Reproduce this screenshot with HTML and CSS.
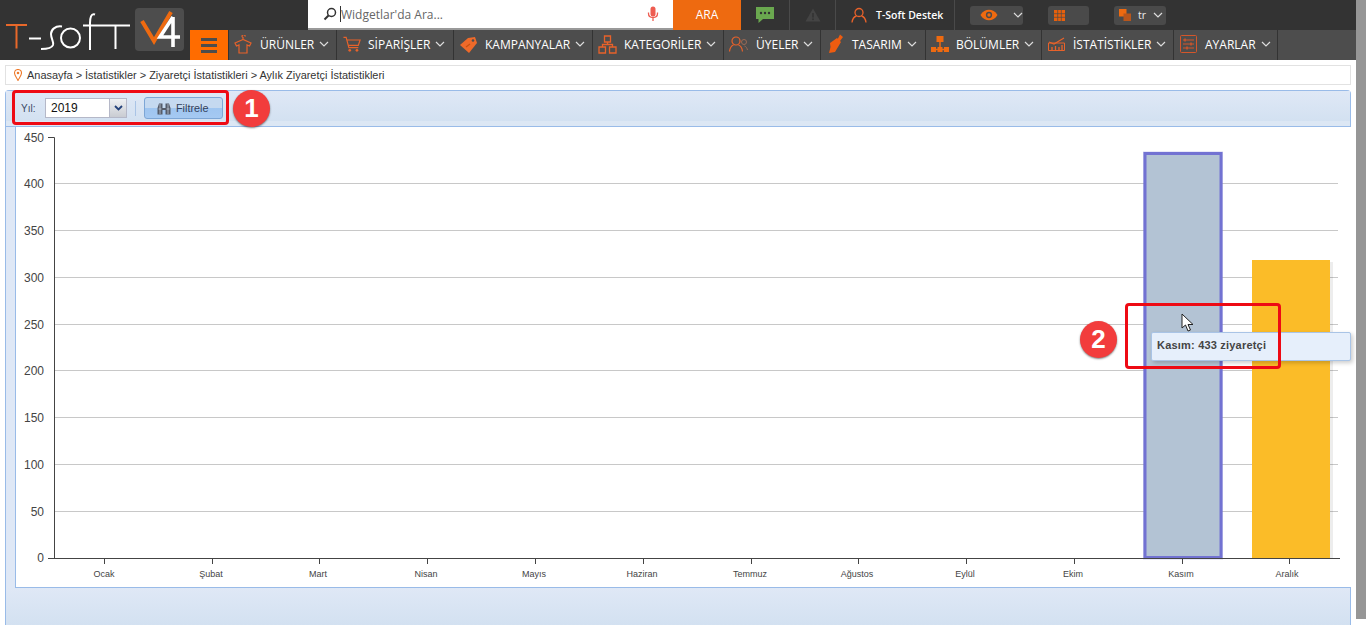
FILE: index.html
```html
<!DOCTYPE html>
<html lang="tr">
<head>
<meta charset="utf-8">
<title>Aylık Ziyaretçi İstatistikleri</title>
<link rel="stylesheet" href="styles.css">
</head>
<body>
<div class="page">
<header class="header">
  <a class="logo">
    <svg width="190" height="60" viewBox="0 0 190 60">
      <path d="M6 25H27M16.500 25V48.500" fill="none" stroke="#e8682a" stroke-width="2"/>
      <path d="M29 38.500H41" fill="none" stroke="#fff" stroke-width="2"/>
      <path d="M62 26.500C55 25.500 51 30 51 34C51 39 54 41 53 45C52 48 48 49 41 49" fill="none" stroke="#fff" stroke-width="2"/>
      <circle cx="70.500" cy="38" r="9.500" fill="none" stroke="#fff" stroke-width="2"/>
      <path d="M95 14.500C91 13 90 18 90 23V50M83 25.500H130M115.500 25.500V49" fill="none" stroke="#fff" stroke-width="2"/>
      <rect x="135" y="8" width="49" height="43" rx="4" fill="#4d4d4d"/>
      <path d="M142 21L154 41L171 12" fill="none" stroke="#ee6a10" stroke-width="4"/>
      <path d="M173 17V47M173 17L160 37H180" fill="none" stroke="#fff" stroke-width="3.600"/>
    </svg>
  </a>
  <div class="bars">
    <div class="topbar">
      <form class="search">
        <svg class="search-ico" width="14" height="14" viewBox="0 0 14 14"><circle cx="8.500" cy="5.500" r="4" fill="none" stroke="#333" stroke-width="1.500"/><path d="M5.500 8.500L1.500 12.500" stroke="#333" stroke-width="2"/></svg>
        <span class="caret"></span>
        <span class="placeholder">Widgetlar'da Ara...</span>
        <svg class="mic" width="12" height="16" viewBox="0 0 12 16"><rect x="3.500" y="0.500" width="5" height="10" rx="2.500" fill="#ee5c50"/><path d="M1.500 6.500V7.500C1.500 10 3.500 11.500 6 11.500C8.500 11.500 10.500 10 10.500 7.500V6.500M6 11.500V15" fill="none" stroke="#ee5c50" stroke-width="1.300"/></svg>
      </form>
      <div class="ara">ARA</div>
      <div class="cell cell-msg">
        <svg width="20" height="18" viewBox="0 0 20 18"><path d="M1 1H19V13H8L3.500 17V13H1Z" fill="#6aa84f"/><circle cx="6" cy="7" r="1.200" fill="#333"/><circle cx="10" cy="7" r="1.200" fill="#333"/><circle cx="14" cy="7" r="1.200" fill="#333"/></svg>
      </div>
      <div class="cell cell-warn">
        <svg width="16" height="14" viewBox="0 0 16 14"><path d="M8 0.500L15.500 13.500H0.500Z" fill="#444"/><rect x="7.200" y="5" width="1.600" height="4.500" fill="#333"/><rect x="7.200" y="10.500" width="1.600" height="1.600" fill="#333"/></svg>
      </div>
      <div class="cell cell-user">
        <svg width="16" height="16" viewBox="0 0 16 16"><circle cx="8" cy="5.500" r="4" fill="none" stroke="#e8622a" stroke-width="1.300"/><path d="M1 15.500C1.500 11.500 3.500 9.500 5.500 9M15 15.500C14.500 11.500 12.500 9.500 10.500 9" fill="none" stroke="#e8622a" stroke-width="1.300"/></svg>
        <span class="user-name">T-Soft Destek</span>
      </div>
      <div class="tools">
        <div class="pill pill-eye">
          <svg width="19" height="12" viewBox="0 0 19 12"><path d="M0.500 6C3 2 6 0.500 9.500 0.500C13 0.500 16 2 18.500 6C16 10 13 11.500 9.500 11.500C6 11.500 3 10 0.500 6Z" fill="#ee6a10"/><circle cx="9.500" cy="6" r="3.300" fill="#4a4a4a"/><circle cx="9.500" cy="6" r="1.800" fill="#ee6a10"/></svg>
          <svg class="chev" width="10" height="6" viewBox="0 0 10 6"><path d="M1 1L5 5L9 1" fill="none" stroke="#ddd" stroke-width="1.200"/></svg>
        </div>
        <div class="pill pill-grid">
          <svg width="11" height="11" viewBox="0 0 11 11"><path d="M0 0H11V11H0Z" fill="#e8600c"/><path d="M0 3.700H11M0 7.300H11M3.700 0V11M7.300 0V11" stroke="#4a4a4a" stroke-width="0.700"/></svg>
        </div>
        <div class="pill pill-lang">
          <svg width="12" height="12" viewBox="0 0 12 12"><rect x="0" y="0" width="7.500" height="7.500" fill="#ee6a10"/><rect x="4.500" y="4.500" width="7.500" height="7.500" fill="#b8561c"/></svg>
          <span class="lang">tr</span>
          <svg class="chev" width="10" height="6" viewBox="0 0 10 6"><path d="M1 1L5 5L9 1" fill="none" stroke="#ddd" stroke-width="1.200"/></svg>
        </div>
      </div>
    </div>
    <nav class="nav">
      <div class="burger"><span></span><span></span><span></span></div>
      <div class="item w-urun">
        <svg width="18" height="19" viewBox="0 0 18 19"><path d="M9 4.500L9 2.500A1.500 1.500 0 1 1 11 1.500M9 4.500L1 8L2.500 11L5 10V18H13V10L15.500 11L17 8Z" fill="none" stroke="#e8622a" stroke-width="1.200"/></svg>
        <span>ÜRÜNLER</span><svg class="chev" width="10" height="6" viewBox="0 0 10 6"><path d="M1 1L5 5L9 1" fill="none" stroke="#ddd" stroke-width="1.200"/></svg>
      </div>
      <div class="item w-sip">
        <svg width="18" height="17" viewBox="0 0 20 18"><path d="M0.500 1H3.500L6.500 12.500H17M4.500 4H19L17 10H6" fill="none" stroke="#e8622a" stroke-width="1.300"/><circle cx="7.500" cy="15.500" r="1.500" fill="#e8622a"/><circle cx="15.500" cy="15.500" r="1.500" fill="#e8622a"/></svg>
        <span>SİPARİŞLER</span><svg class="chev" width="10" height="6" viewBox="0 0 10 6"><path d="M1 1L5 5L9 1" fill="none" stroke="#ddd" stroke-width="1.200"/></svg>
      </div>
      <div class="item w-kam">
        <svg width="19" height="19" viewBox="0 0 19 19"><path d="M1 10L9 3L16 2L18 8L10 18Z" fill="#ee6a2a"/><circle cx="14" cy="5.500" r="1.300" fill="#4d4d4d"/><path d="M7 12L11 9" stroke="#c9500f" stroke-width="1.200"/></svg>
        <span>KAMPANYALAR</span><svg class="chev" width="10" height="6" viewBox="0 0 10 6"><path d="M1 1L5 5L9 1" fill="none" stroke="#ddd" stroke-width="1.200"/></svg>
      </div>
      <div class="item w-kat">
        <svg width="19" height="19" viewBox="0 0 19 19"><path d="M6.500 1H12.500V7H6.500ZM1 12H7.500V18H1ZM11.500 12H18V18H11.500ZM9.500 7V9.500M4.500 12V9.500H14.500V12" fill="none" stroke="#e8622a" stroke-width="1.300"/></svg>
        <span>KATEGORİLER</span><svg class="chev" width="10" height="6" viewBox="0 0 10 6"><path d="M1 1L5 5L9 1" fill="none" stroke="#ddd" stroke-width="1.200"/></svg>
      </div>
      <div class="item w-uye">
        <svg width="19" height="16" viewBox="0 0 19 16"><circle cx="7" cy="5" r="4" fill="none" stroke="#e8622a" stroke-width="1.200"/><path d="M0.500 15.500C1 11.500 3 9.500 4.500 9M13.500 15.500C13 11.500 11 9.500 9.500 9" fill="none" stroke="#e8622a" stroke-width="1.200"/><circle cx="15" cy="6" r="2.500" fill="none" stroke="#9a6a55" stroke-width="1"/><path d="M15.500 10C17 10.500 18 12 18.500 14" fill="none" stroke="#9a6a55"/></svg>
        <span>ÜYELER</span><svg class="chev" width="10" height="6" viewBox="0 0 10 6"><path d="M1 1L5 5L9 1" fill="none" stroke="#ddd" stroke-width="1.200"/></svg>
      </div>
      <div class="item w-tas">
        <svg width="16" height="20" viewBox="0 0 16 20"><path d="M12 0.500L15 3L12 7L9.500 5.500ZM9 4L13 8L7 18L1 19L2.500 13L2 9Z" fill="#ee5c10"/></svg>
        <span>TASARIM</span><svg class="chev" width="10" height="6" viewBox="0 0 10 6"><path d="M1 1L5 5L9 1" fill="none" stroke="#ddd" stroke-width="1.200"/></svg>
      </div>
      <div class="item w-bol">
        <svg width="18" height="18" viewBox="0 0 18 18"><rect x="5.500" y="1" width="7" height="6" fill="#ee6a10"/><rect x="0" y="12" width="5" height="5" fill="#ee6a10"/><rect x="6.500" y="12" width="5" height="5" fill="#ee6a10"/><rect x="13" y="12" width="5" height="5" fill="#ee6a10"/><path d="M9 7V14M4 14.500H14" stroke="#ee6a10" stroke-width="1.500"/></svg>
        <span>BÖLÜMLER</span><svg class="chev" width="10" height="6" viewBox="0 0 10 6"><path d="M1 1L5 5L9 1" fill="none" stroke="#ddd" stroke-width="1.200"/></svg>
      </div>
      <div class="item w-ist">
        <svg width="17" height="14" viewBox="0 0 17 14"><path d="M0.500 13.500V6H16.500V13.500Z" fill="none" stroke="#e8622a"/><path d="M1 5L6 7L11 4L16 1" fill="none" stroke="#e8622a" stroke-width="1.200"/><path d="M4 13V10M7.500 13V9M11 13V10M14 13V8" stroke="#e8622a" stroke-width="1.300"/></svg>
        <span>İSTATİSTİKLER</span><svg class="chev" width="10" height="6" viewBox="0 0 10 6"><path d="M1 1L5 5L9 1" fill="none" stroke="#ddd" stroke-width="1.200"/></svg>
      </div>
      <div class="item w-aya">
        <svg width="17" height="18" viewBox="0 0 17 18"><rect x="0.500" y="0.500" width="16" height="17" rx="1" fill="none" stroke="#d4562a"/><path d="M3 5H14M3 9H14M3 13H14" stroke="#d4562a"/><path d="M5 3.500V6.500M11 7.500V10.500M7 11.500V14.500" stroke="#d4562a" stroke-width="1.400"/></svg>
        <span>AYARLAR</span><svg class="chev" width="10" height="6" viewBox="0 0 10 6"><path d="M1 1L5 5L9 1" fill="none" stroke="#ddd" stroke-width="1.200"/></svg>
      </div>
    </nav>
  </div>
</header>

<main class="main">
  <div class="crumbs">
    <svg width="8" height="12" viewBox="0 0 8 12"><path d="M4 0.500C1.800 0.500 0.500 2 0.500 4C0.500 6.500 3 9 4 11.500C5 9 7.500 6.500 7.500 4C7.500 2 6.200 0.500 4 0.500Z" fill="none" stroke="#ee7a2a" stroke-width="1.100"/><circle cx="4" cy="4" r="1.300" fill="#ee7a2a"/></svg>
    <span>Anasayfa &gt; İstatistikler &gt; Ziyaretçi İstatistikleri &gt; Aylık Ziyaretçi İstatistikleri</span>
  </div>
  <section class="panel">
    <div class="toolbar">
      <label class="year-label">Yıl:</label>
      <div class="combo"><span class="combo-val">2019</span><span class="combo-btn"><svg width="9" height="6" viewBox="0 0 9 6"><path d="M1 1L4.500 4.500L8 1" fill="none" stroke="#23417a" stroke-width="1.800"/></svg></span></div>
      <span class="tsep"></span>
      <button class="filter" type="button">
        <svg width="14" height="13" viewBox="0 0 14 13"><path d="M0.500 12.500V6L2 1.500H5.500V6H8.500V1.500H12L13.500 6V12.500H8.500V8H5.500V12.500Z" fill="#555c6a"/><path d="M1.500 7H4.500M9.500 7H12.500M3 2V12M11 2V12" stroke="#cfd6e2" stroke-width="0.700"/></svg>
        <span>Filtrele</span>
      </button>
    </div>
    <div class="chart">
      <svg class="plot" width="1336" height="460" viewBox="15 127 1336 460">
        <g class="grid">
          <path d="M54 183.500H1338M54 230.500H1338M54 277.500H1338M54 324.500H1338M54 370.500H1338M54 417.500H1338M54 464.500H1338M54 511.500H1338"/>
        </g>
        <rect x="1330" y="262" width="3" height="296" fill="#000" opacity=".07"/>
        <rect x="1252" y="260" width="78" height="298" fill="#fbbc28"/>
        <rect x="1143" y="151.500" width="80" height="408" fill="#6c6cd0" opacity=".3"/>
        <rect x="1145" y="153.500" width="76" height="404" fill="#b3c3d4" stroke="#7272d2" stroke-width="3"/>
        <path class="axis" d="M48 137.500H54.500V558.500M48 558.500H1340M104.500 558V564M212.500 558V564M319.500 558V564M427.500 558V564M535.500 558V564M643.500 558V564M751.500 558V564M858.500 558V564M966.500 558V564M1074.500 558V564M1182.500 558V564M1289.500 558V564"/>
        <g class="ylabels">
          <text x="44" y="142">450</text><text x="44" y="188">400</text><text x="44" y="235">350</text><text x="44" y="282">300</text><text x="44" y="329">250</text><text x="44" y="375">200</text><text x="44" y="422">150</text><text x="44" y="469">100</text><text x="44" y="516">50</text><text x="44" y="562">0</text>
        </g>
        <g class="xlabels">
          <text x="104" y="577">Ocak</text><text x="211" y="577">Şubat</text><text x="318" y="577">Mart</text><text x="426" y="577">Nisan</text><text x="534" y="577">Mayıs</text><text x="642" y="577">Haziran</text><text x="750" y="577">Temmuz</text><text x="857" y="577">Ağustos</text><text x="965" y="577">Eylül</text><text x="1073" y="577">Ekim</text><text x="1181" y="577">Kasım</text><text x="1287" y="577">Aralık</text>
        </g>
      </svg>
      <div class="tip">Kasım: 433 ziyaretçi</div>
    </div>
    <div class="panel-foot"></div>
  </section>
  <div class="note note-1"></div>
  <div class="badge badge-1">1</div>
  <div class="note note-2"></div>
  <div class="badge badge-2">2</div>
  <svg class="cursor" width="14" height="20" viewBox="0 0 14 20"><path d="M1 1V15L4.500 12L7 18L9.500 17L7 11.500H12Z" fill="#fff" stroke="#222" stroke-width="1"/></svg>
</main>
<div class="scrollbar"></div>
</div>
</body>
</html>
```
FILE: styles.css
```css
* { box-sizing: border-box; }
html, body { margin: 0; padding: 0; height: 100%; overflow: hidden; background: #fff; }
body { font-family: "Liberation Sans", Arial, sans-serif; color: #333; }
.page { position: relative; width: 1366px; height: 625px; overflow: hidden; }

.header { display: flex; width: 1356px; height: 60px; background: #333; }
.logo { display: block; width: 190px; height: 60px; flex: none; }
.bars { flex: 1; display: flex; flex-direction: column; min-width: 0; }
.topbar { display: flex; height: 30px; padding-left: 118px; font-family: "Open Sans", sans-serif; }
.search { display: flex; align-items: center; width: 365px; height: 30px; background: #fff; border-bottom: 2px solid #999; padding: 0 14px 0 15px; }
.search-ico { flex: none; }
.caret { width: 1px; height: 16px; background: #333; margin-left: 3px; }
.placeholder { flex: 1; font-size: 12px; color: #666; }
.mic { flex: none; }
.ara { width: 68px; height: 30px; background: #ee6a10; color: #fff; font-size: 12px; line-height: 30px; text-align: center; }
.cell { display: flex; align-items: center; justify-content: center; height: 30px; border-right: 1px solid #4a4a4a; }
.cell-msg { width: 49px; }
.cell-warn { width: 46px; }
.cell-user { width: 119px; justify-content: flex-start; gap: 9px; padding-left: 15px; }
.user-name { color: #fff; font-size: 10.5px; font-weight: 600; white-space: nowrap; }
.tools { display: flex; align-items: center; padding-left: 15px; }
.pill { display: flex; align-items: center; height: 19px; border-radius: 3px; background: #4a4a4a; }
.pill-eye { width: 53px; padding-left: 10px; gap: 15px; margin-right: 25px; }
.pill-grid { width: 41px; padding-left: 6px; margin-right: 25px; }
.pill-lang { width: 52px; padding-left: 5px; }
.lang { color: #eee; font-size: 10.5px; margin: 0 7px 0 7px; }
.chev { flex: none; }

.nav { display: flex; height: 30px; background: #4d4d4d; font-family: "Open Sans", sans-serif; font-size: 12px; color: #fff; }
.burger { display: flex; flex-direction: column; justify-content: center; gap: 3px; width: 38px; height: 30px; background: #ff6c00; padding: 0 11px; }
.burger span { display: block; height: 3px; background: #4d4d4d; }
.item { display: flex; align-items: center; height: 30px; border-left: 1px solid #333; padding: 0 0 2px 5px; white-space: nowrap; }
.item span { margin-left: 8px; margin-right: 5px; }
.w-urun { width: 108px; }
.w-sip { width: 117px; padding-left: 6px; }
.w-kam { width: 139px; }
.w-kat { width: 131px; }
.w-uye { width: 97px; }
.w-tas { width: 105px; padding-left: 7px; }
.w-bol { width: 116px; }
.w-ist { width: 132px; padding-left: 6px; }
.w-aya { width: 105px; padding-left: 6px; border-right: 1px solid #333; }
.w-sip span, .w-kam span, .w-kat span, .w-bol span { margin-left: 7px; }

.main { position: relative; padding: 5px 15px 0 5px; height: 565px; width: 1366px; }
.crumbs { display: flex; align-items: center; gap: 5px; height: 20px; width: 1346px; padding-left: 8px; border: 1px solid #e2e2e2; background: #fff; font-size: 10.950px; color: #333; }
.panel { margin-top: 5px; width: 1346px; height: 535px; border: 1px solid #99bbe8; border-bottom: 0; border-radius: 4px 4px 0 0; background: #dfe8f6; padding-left: 9px; }
.toolbar { display: flex; align-items: center; height: 36px; margin-left: -9px; padding: 0 0 1px 15px; border-bottom: 1px solid #99bbe8; background: linear-gradient(#dfe8f6 0, #d3e1f1 85%, #dce7f4 85%); font-size: 10px; color: #3a4a66; }
.year-label { width: 24px; }
.combo { display: flex; width: 82px; height: 20px; border: 1px solid #b5b8c8; background: #fff; }
.combo-val { flex: 1; font-size: 12px; color: #111; line-height: 18px; padding-left: 5px; }
.combo-btn { display: flex; align-items: center; justify-content: center; width: 17px; background: linear-gradient(#eef0f3, #c9ccd2); border-left: 1px solid #b5b8c8; }
.tsep { width: 1px; height: 15px; margin: 0 8px; background: #a9c4e6; }
.filter { display: flex; align-items: center; gap: 5px; height: 22px; width: 79px; padding: 0 0 0 12px; border: 1px solid #7da6d6; border-radius: 3px; background: linear-gradient(#c5d9f0 0, #c5d9f0 50%, #9fc5f0 50%, #a5c9f2 100%); font-family: "Liberation Sans", sans-serif; font-size: 10.800px; color: #33405a; }
.chart { position: relative; width: 1336px; height: 461px; background: #fff; border-bottom: 1px solid #99bbe8; border-left: 1px solid #99bbe8; }
.plot { display: block; margin-left: -1px; }
.grid path { fill: none; stroke: #c8c8c8; stroke-width: 1; }
.axis { fill: none; stroke: #444; stroke-width: 1; }
.ylabels text { font: 12px "Liberation Sans", sans-serif; fill: #444; text-anchor: end; }
.xlabels text { font: 9px "Liberation Sans", sans-serif; fill: #444; text-anchor: middle; }
.tip { position: absolute; left: 1135px; top: 205px; width: 200px; height: 29px; padding-left: 5px; line-height: 24px; background: #e6effb; border: 1px solid #a9c4e6; border-radius: 2px; box-shadow: 2px 2px 4px rgba(0,0,0,.2); font-size: 11px; font-weight: 700; color: #444; letter-spacing: 0.2px; }
.panel-foot { height: 37px; margin-left: -9px; background: linear-gradient(#dfe8f6, #d3e1f1); }

.note { position: absolute; border: 3px solid #ee0a14; border-radius: 4px; }
.note-1 { left: 12px; top: 30px; width: 217px; height: 35px; }
.note-2 { left: 1125px; top: 243px; width: 156px; height: 66px; }
.badge { position: absolute; width: 37px; height: 37px; border-radius: 50%; background: #f23c3c; color: #fff; font-size: 26px; font-weight: 700; line-height: 37px; text-align: center; box-shadow: 0 1px 2px rgba(0,0,0,.5); }
.badge-1 { left: 233px; top: 30px; }
.badge-2 { left: 1080px; top: 261px; }
.cursor { position: absolute; left: 1181px; top: 253px; }
.scrollbar { position: absolute; right: 0; top: 0; width: 10px; height: 619px; background: #969696; }
```
